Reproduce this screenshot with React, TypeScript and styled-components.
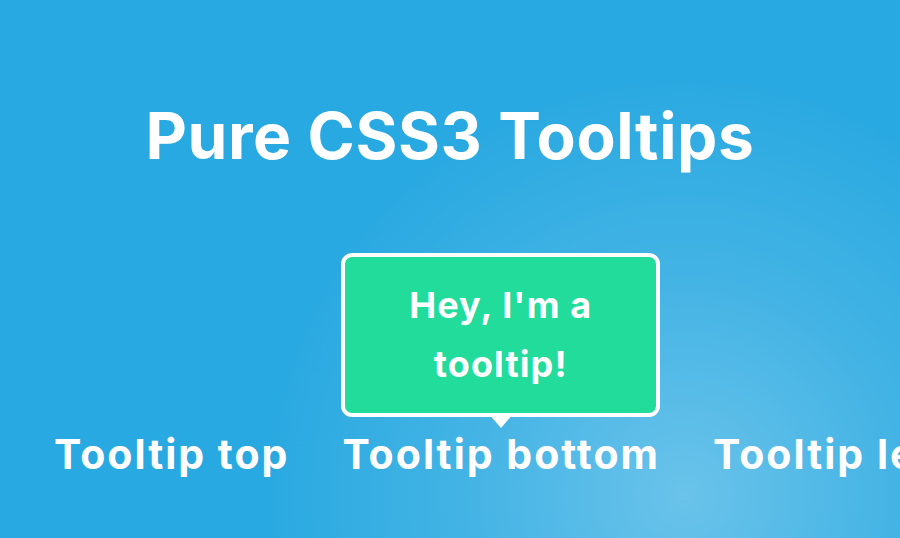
import React from 'react';
import styled, { createGlobalStyle } from 'styled-components';

const GlobalStyle = createGlobalStyle`
  html, body {
    margin : 0;
    padding : 0;
  }
  body {
    font-family : Inter, "Open Sans", "Liberation Sans", sans-serif;
    color : #fff;
  }
`

const B_Page = styled.div`
  width : 900px;
  height : 538px;
  overflow : hidden;
  background : #29a9e1;
  background-image : radial-gradient(circle at 76% 92%, rgba(255,255,255,.3) 0, rgba(255,255,255,.12) 220px, rgba(255,255,255,0) 420px);
  display : flex;
  flex-direction : column;
  align-items : center;
`

const B_Title = styled.h1`
  margin : 96px 0 0;
  font-size : 64px;
  font-weight : 700;
  line-height : 80px;
  letter-spacing : .6px;
`

const B_List = styled.ul`
  list-style : none;
  align-self : flex-start;
  display : flex;
  gap : 53px;
  margin : 254px 0 0;
  padding : 0 0 0 54px;
  white-space : nowrap;
`

const B_Item = styled.li`
  position : relative;
  font-size : 41px;
  font-weight : 700;
  line-height : 48px;
  letter-spacing : 2px;
`

const B_Tooltip = styled.div`
  position : absolute;
  left : -1px;
  right : 0;
  bottom : calc(100% + 13px);
  box-sizing : border-box;
  padding : 19px 16px;
  background : #21dc9b;
  border : 4px solid #fff;
  border-radius : 11px;
  font-size : 36px;
  line-height : 59px;
  letter-spacing : 1.1px;
  text-align : center;
  white-space : normal;

  &::after {
    content : '';
    position : absolute;
    left : 50%;
    top : 100%;
    margin-left : -13px;
    border-left : 13px solid transparent;
    border-right : 13px solid transparent;
    border-top : 15px solid #fff;
  }
`

const items = [
  {label : 'Tooltip top'},
  {label : 'Tooltip bottom', tip : "Hey, I'm a tooltip!"},
  {label : 'Tooltip left'},
  {label : 'Tooltip right'},
]

const App = () => {
  return (
    <>
      <GlobalStyle/>
      <B_Page>
        <B_Title>Pure CSS3 Tooltips</B_Title>
        <B_List>
          {items.map((i, index) => (
            <B_Item key={index+'B_item'}>
              {i.label}
              {i.tip && <B_Tooltip>{i.tip}</B_Tooltip>}
            </B_Item>
          ))}
        </B_List>
      </B_Page>
    </>
  )
}

export default App;
